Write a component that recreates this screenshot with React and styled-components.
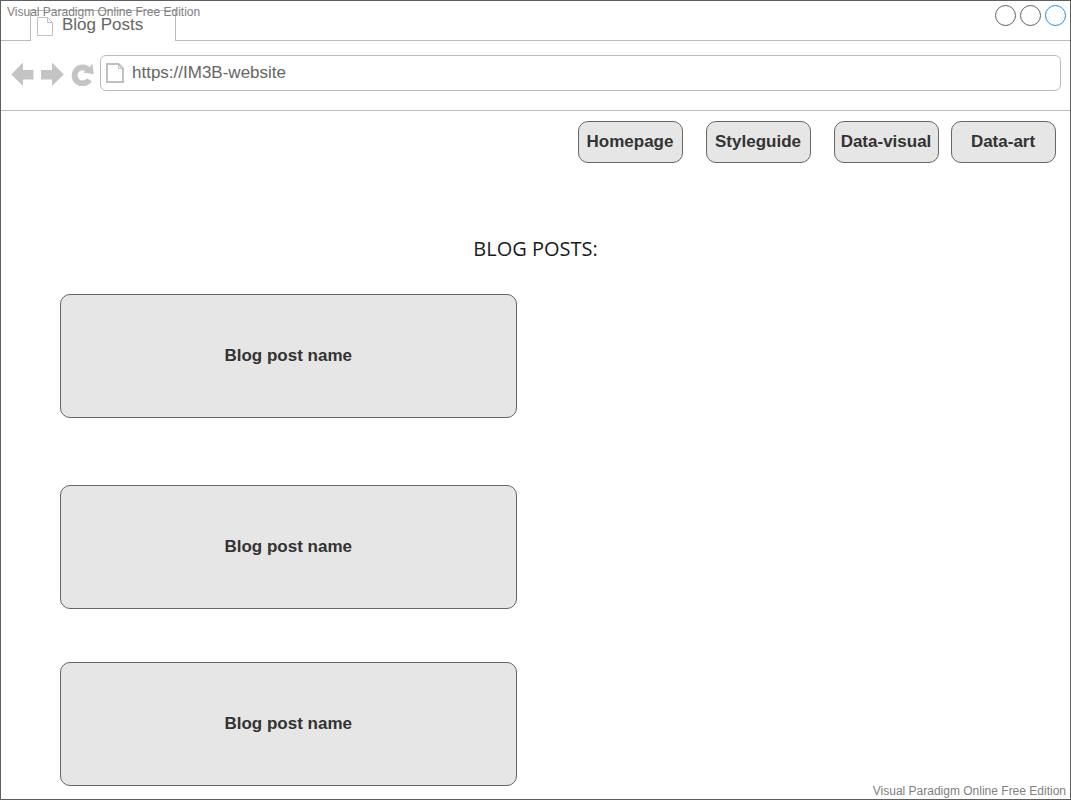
import React from "react";
import styled, { createGlobalStyle } from "styled-components";

const GlobalStyle = createGlobalStyle`
  *, *::before, *::after { box-sizing: border-box; }
  body {
    margin: 0;
    background: #fff;
    color: #333;
    font-family: "Liberation Sans", Arial, sans-serif;
    font-size: 17px;
    line-height: 20px;
  }
`;

const Browser = styled.div`
  position: relative;
  display: flex;
  flex-direction: column;
  min-height: 100vh;
  border: 1px solid #5f5f5f;
`;

const TabStrip = styled.header`
  display: flex;
  height: 40px;
`;

const StripEdge = styled.div`
  display: flex;
  justify-content: flex-end;
  flex: ${(p) => (p.$grow ? "1" : "0 0 29px")};
  gap: 4px;
  padding: ${(p) => (p.$grow ? "4px 4px 0 0" : "0")};
  border-bottom: 1px solid #bbb;
`;

const Tab = styled.div`
  display: flex;
  align-items: flex-start;
  gap: 9px;
  width: 146px;
  margin-top: 9px;
  padding: 4px 6px 0;
  border: 1px solid #bbb;
  border-bottom: 0;
  color: #666;

  svg { margin-top: 2px; }
`;

const WindowButton = styled.button`
  width: 21px;
  height: 21px;
  padding: 0;
  border: 1px solid ${(p) => (p.$active ? "#1a90e0" : "#5f5f5f")};
  border-radius: 50%;
  background: transparent;
`;

const Toolbar = styled.div`
  display: flex;
  align-items: flex-start;
  height: 70px;
  padding: 14px 9px 0 7px;
  border-bottom: 1px solid #bbb;
`;

const ToolButton = styled.button`
  display: flex;
  align-items: center;
  justify-content: center;
  width: 30px;
  height: 38px;
  padding: 0;
  border: 0;
  background: transparent;
`;

const AddressBar = styled.label`
  display: flex;
  align-items: center;
  flex: 1;
  gap: 8px;
  height: 36px;
  margin-left: 2px;
  padding: 0 5px;
  border: 1px solid #bbb;
  border-radius: 6px;
`;

const AddressInput = styled.input`
  flex: 1;
  min-width: 0;
  height: 34px;
  padding: 0;
  border: 0;
  outline: 0;
  background: transparent;
  color: #666;
  font: inherit;
`;

const Nav = styled.nav`
  display: flex;
  justify-content: flex-end;
  flex-wrap: wrap;
  gap: 12px;
  padding: 10px 14px 0;
`;

const NavGroup = styled.div`
  display: flex;
  gap: 23px;
`;

const NavButton = styled.button`
  width: 105px;
  height: 42px;
  padding: 0 1px 1px 0;
  border: 1px solid #666;
  border-radius: 10px;
  background: #e6e6e6;
  color: #333;
  font: inherit;
  font-weight: 700;
  white-space: nowrap;
`;

const Title = styled.h1`
  margin: 72px 0 0;
  color: #1a1a1a;
  font: 400 20px/28px "Open Sans", sans-serif;
  text-align: center;
`;

const Posts = styled.main`
  display: flex;
  flex-direction: column;
  padding: 31px 59px 13px;
`;

const PostCard = styled.a`
  display: flex;
  align-items: center;
  justify-content: center;
  width: 48.1%;
  min-width: 240px;
  height: 124px;
  margin-bottom: ${(p) => p.$after}px;
  padding: 0 1px 1px 0;
  border: 1px solid #666;
  border-radius: 10px;
  background: #e6e6e6;
  color: #333;
  font-weight: 700;
  text-decoration: none;
`;

const Watermark = styled.span`
  position: absolute;
  ${(p) => (p.$bottom ? "right: 4px; bottom: 1px;" : "left: 6px; top: 4px;")}
  color: #808080;
  font-size: 12px;
  line-height: 14px;
  pointer-events: none;
`;

const Page = ({ width, height, stroke }) => (
  <svg width={width} height={height} viewBox={`0 0 ${width} ${height}`} fill="none" stroke="#c0c0c0" strokeWidth={stroke} aria-hidden="true">
    <path d={`M${stroke / 2} ${stroke / 2}H${width - 5.5}L${width - stroke / 2} 5.5V${height - stroke / 2}H${stroke / 2}Z`} />
    <path d={`M${width - 5.5} ${stroke / 2}V5.5H${width - stroke / 2}`} strokeWidth="1" />
  </svg>
);

const Arrow = ({ forward }) => (
  <svg width="24" height="24" viewBox="0 0 24 24" fill="#c4c4c4" aria-hidden="true">
    <path d={forward ? "M0 8H11V.5L22.8 12.5L11 24V17.5H0Z" : "M22.5 8H12V.5L.3 12.5L12 24V17.5H22.5Z"} />
  </svg>
);

const Reload = () => (
  <svg width="24" height="24" viewBox="0 0 24 24" aria-hidden="true">
    <path d="M17.5 8A8 8 0 1 0 18.3 17.7" fill="none" stroke="#c4c4c4" strokeWidth="5.8" />
    <path d="M21.3 1.8L22.8 12.2L12.2 10.4L17 7Z" fill="#c4c4c4" />
  </svg>
);

const posts = [
  { id: "first", after: 67 },
  { id: "second", after: 53 },
  { id: "third", after: 0 },
];

export default function App() {
  return (
    <Browser>
      <GlobalStyle />
      <TabStrip>
        <StripEdge />
        <Tab>
          <Page width={16} height={19} stroke={1} />
          Blog Posts
        </Tab>
        <StripEdge $grow>
          <WindowButton aria-label="Minimize" />
          <WindowButton aria-label="Maximize" />
          <WindowButton aria-label="Close" $active />
        </StripEdge>
      </TabStrip>
      <Toolbar>
        <ToolButton aria-label="Back"><Arrow /></ToolButton>
        <ToolButton aria-label="Forward"><Arrow forward /></ToolButton>
        <ToolButton aria-label="Reload"><Reload /></ToolButton>
        <AddressBar>
          <Page width={18} height={20} stroke={2} />
          <AddressInput type="text" aria-label="Address" defaultValue="https://IM3B-website" />
        </AddressBar>
      </Toolbar>
      <Nav>
        <NavGroup>
          <NavButton>Homepage</NavButton>
          <NavButton>Styleguide</NavButton>
          <NavButton>Data-visual</NavButton>
        </NavGroup>
        <NavButton>Data-art</NavButton>
      </Nav>
      <Title>BLOG POSTS:</Title>
      <Posts>
        {posts.map((post) => (
          <PostCard key={post.id} href={`#${post.id}`} $after={post.after}>
            Blog post name
          </PostCard>
        ))}
      </Posts>
      <Watermark>Visual Paradigm Online Free Edition</Watermark>
      <Watermark $bottom>Visual Paradigm Online Free Edition</Watermark>
    </Browser>
  );
}
